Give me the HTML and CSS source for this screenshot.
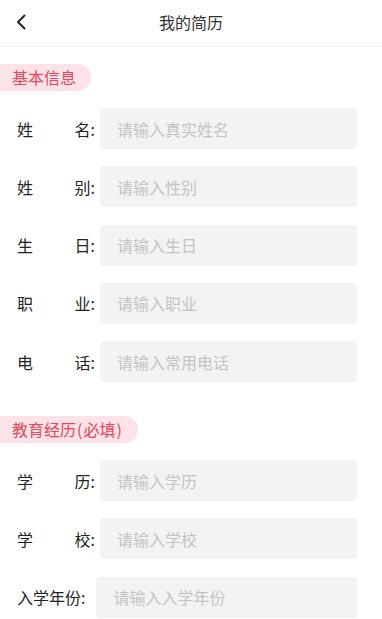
FILE: index.html
```html
<!DOCTYPE html>
<html lang="zh">
<head>
<meta charset="utf-8">
<title>我的简历</title>
<link rel="stylesheet" href="styles.css">
</head>
<body>
<div class="page">
  <header class="topbar">
    <span class="back">
      <svg width="12" height="16" viewBox="0 0 12 16"><path d="M9.5 1.5 L3 8 L9.5 14.5" fill="none" stroke="#222" stroke-width="2" stroke-linecap="round" stroke-linejoin="round"/></svg>
    </span>
    <h1 class="title">我的简历</h1>
  </header>

  <section class="section">
    <div class="tag">基本信息</div>
    <div class="rows">
      <div class="row"><label class="label spread"><span>姓</span><span>名:</span></label><div class="field">请输入真实姓名</div></div>
      <div class="row"><label class="label spread"><span>姓</span><span>别:</span></label><div class="field">请输入性别</div></div>
      <div class="row"><label class="label spread"><span>生</span><span>日:</span></label><div class="field">请输入生日</div></div>
      <div class="row"><label class="label spread"><span>职</span><span>业:</span></label><div class="field">请输入职业</div></div>
      <div class="row"><label class="label spread"><span>电</span><span>话:</span></label><div class="field">请输入常用电话</div></div>
    </div>
  </section>

  <section class="section second">
    <div class="tag">教育经历<span class="paren">(</span>必填<span class="paren">)</span></div>
    <div class="rows">
      <div class="row"><label class="label spread"><span>学</span><span>历:</span></label><div class="field">请输入学历</div></div>
      <div class="row"><label class="label spread"><span>学</span><span>校:</span></label><div class="field">请输入学校</div></div>
      <div class="row"><label class="label natural">入学年份:</label><div class="field">请输入入学年份</div></div>
    </div>
  </section>
</div>
</body>
</html>
```

FILE: styles.css
```css
* { box-sizing: border-box; }
html, body { margin: 0; padding: 0; background: #fff; }
body {
  font-family: "Noto Sans CJK SC", "Noto Sans", sans-serif;
  color: #333;
  width: 382px;
  height: 619px;
  overflow: hidden;
}
.topbar {
  position: relative;
  height: 47px;
  border-bottom: 1px solid #f0f0f0;
  display: flex;
  align-items: center;
  justify-content: center;
}
.back {
  position: absolute;
  left: 15px;
  top: 14px;
  display: flex;
}
.title {
  margin: 0;
  font-size: 16px;
  font-weight: 400;
  color: #333;
  line-height: 1;
  margin-top: -2px;
}
.section { margin-top: 17px; }
.section.second { margin-top: 34px; }
.tag {
  display: inline-block;
  height: 27px;
  line-height: 27px;
  padding: 0 15px 0 12px;
  font-size: 16px;
  color: #e8475c;
  background: #fde3e7;
  border-radius: 0 14px 14px 0;
}
.paren { margin: 0 1px; }
.rows {
  display: flex;
  flex-direction: column;
  gap: 17.3px;
  margin-top: 17px;
  padding: 0 25px 0 17px;
}
.row {
  display: flex;
  align-items: center;
  height: 41px;
}
.label {
  font-size: 16px;
  color: #222;
  line-height: 1;
}
.label.spread {
  width: 78px;
  margin-right: 5px;
  display: flex;
  justify-content: space-between;
}
.label.natural { margin-right: 11px; }
.field {
  flex: 1;
  height: 41px;
  background: #f3f3f3;
  border-radius: 4px;
  padding-left: 17px;
  display: flex;
  align-items: center;
  font-size: 16px;
  color: #c3c3c3;
}
```
